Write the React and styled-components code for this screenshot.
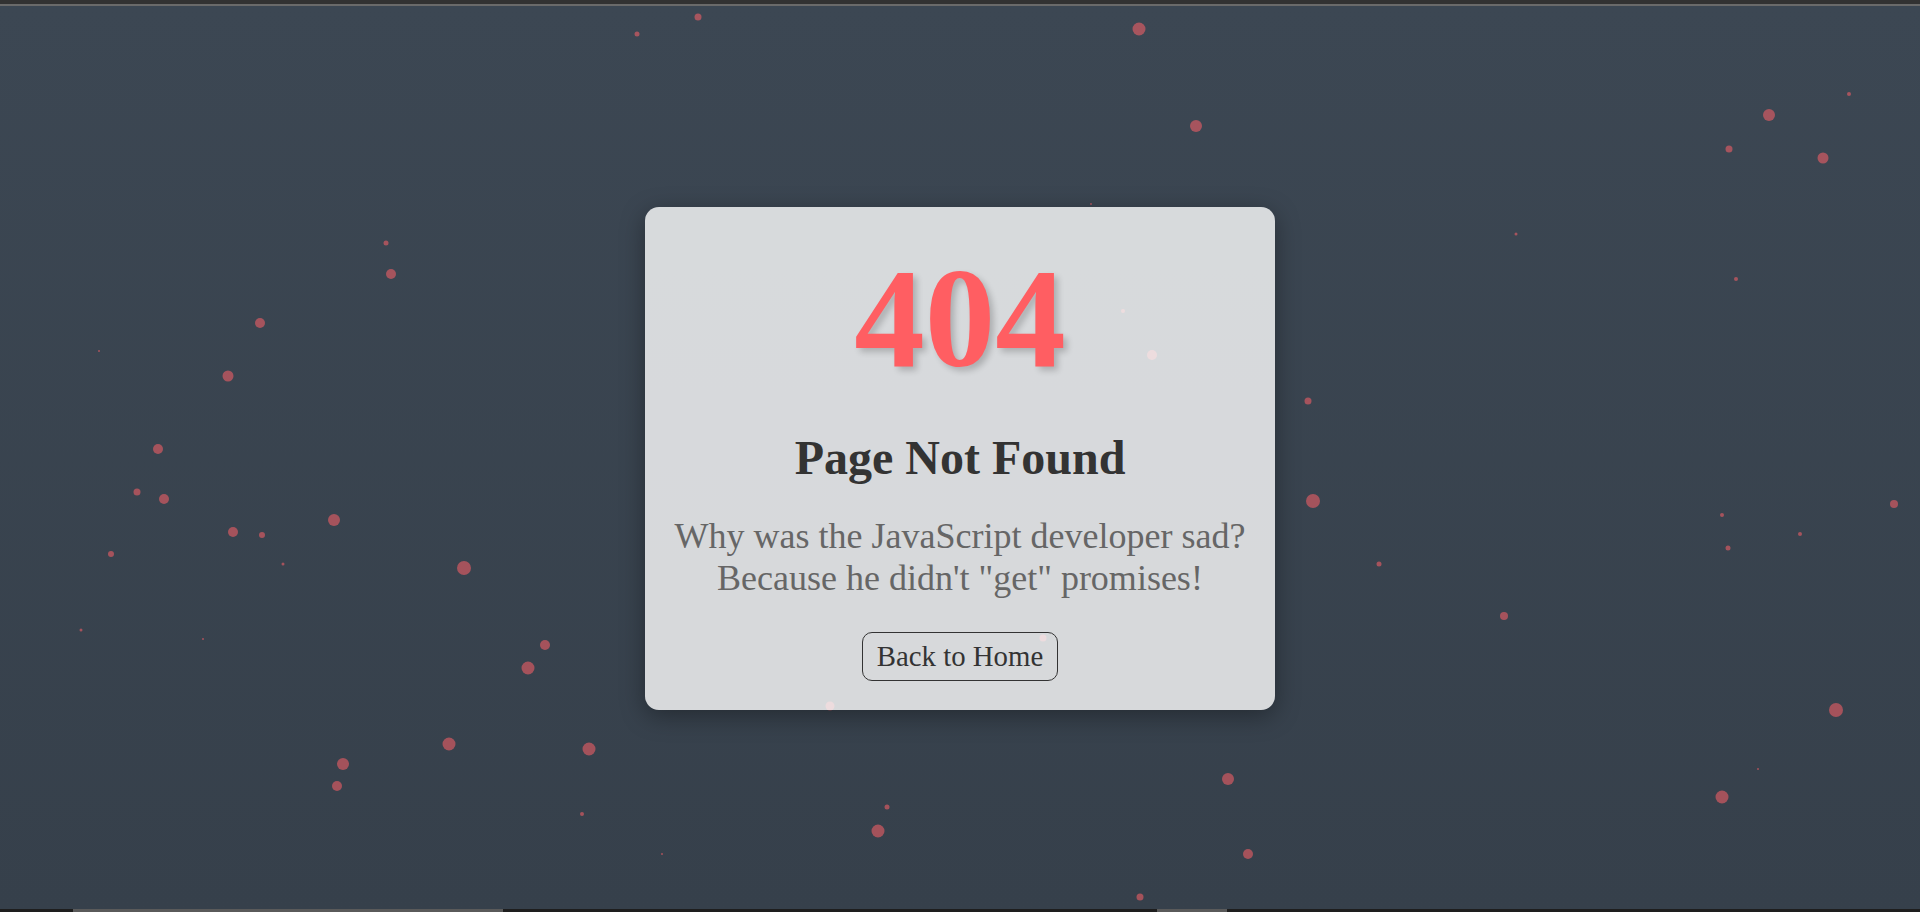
import React from 'react';
import styled, { createGlobalStyle } from 'styled-components';

const GlobalStyle = createGlobalStyle`
  html, body {
    margin: 0;
    padding: 0;
    height: 100%;
    overflow: hidden;
  }
  body {
    font-family: "Liberation Serif", "Times New Roman", serif;
    background: #36404b;
  }
`;

// x, y are centre points, d is diameter
const particles = [
  [698, 16, 7], [637, 33, 5], [1139, 28, 13], [1196, 125, 12], [1769, 114, 12],
  [1849, 93, 4], [1729, 148, 7], [1823, 157, 11], [1516, 233, 3], [1736, 278, 4],
  [386, 242, 5], [391, 273, 10], [260, 322, 10], [228, 375, 11], [99, 350, 2],
  [158, 448, 10], [137, 491, 7], [164, 498, 10], [334, 519, 12], [233, 531, 10],
  [262, 534, 6], [111, 553, 6], [283, 563, 3], [464, 567, 14], [81, 629, 3],
  [203, 638, 2], [545, 644, 10], [528, 667, 13], [449, 743, 13], [589, 748, 13],
  [343, 763, 12], [337, 785, 10], [582, 813, 4], [662, 853, 2], [887, 806, 5],
  [878, 830, 13], [1228, 778, 12], [1248, 853, 10], [1140, 896, 7], [1308, 400, 7],
  [1313, 500, 14], [1379, 563, 5], [1504, 615, 8], [1722, 514, 4], [1728, 547, 5],
  [1800, 533, 4], [1894, 503, 8], [1836, 709, 14], [1722, 796, 13], [1758, 768, 2],
  [1091, 203, 2], [1152, 354, 10], [1123, 310, 4], [830, 705, 9], [1043, 637, 7],
];

const TopChrome = styled.div`
  height: 4px;
  background: #323232;
  border-bottom: 2px solid #6a6a6a;
`;

const Scene = styled.main`
  position: relative;
  height: 903px;
  overflow: hidden;
  background: linear-gradient(180deg, #3c4753 0%, #36404b 100%);
  display: flex;
  align-items: center;
  justify-content: center;
`;

const Particle = styled.span`
  position: absolute;
  border-radius: 50%;
  background: rgba(255, 96, 104, 0.55);
  transform: translate(-50%, -50%);
`;

const Card = styled.section`
  position: relative;
  z-index: 1;
  box-sizing: border-box;
  width: 630px;
  height: 503px;
  margin-top: 2px;
  padding: 30px 20px 30px;
  border-radius: 14px;
  background: rgba(255, 255, 255, 0.8);
  box-shadow: 0 6px 24px rgba(0, 0, 0, 0.35);
  text-align: center;
  display: flex;
  flex-direction: column;
  align-items: center;
`;

const Code = styled.h1`
  margin: 0;
  font-size: 141px;
  font-weight: 700;
  line-height: normal;
  color: #ff5e62;
  text-shadow: 4px 4px 6px rgba(0, 0, 0, 0.2);
`;

const Title = styled.h2`
  margin: 31px 0 0;
  font-size: 48px;
  font-weight: 700;
  line-height: normal;
  color: #333;
`;

const Joke = styled.p`
  margin: 30px 0 0;
  font-size: 36px;
  line-height: normal;
  color: #666;
`;

const HomeButton = styled.button`
  margin-top: 33px;
  padding: 7px 14px;
  font-family: inherit;
  font-size: 28.8px;
  line-height: normal;
  color: #333;
  background: transparent;
  border: 1px solid #333;
  border-radius: 10px;
  cursor: pointer;
`;

const BottomBar = styled.div`
  position: relative;
  height: 3px;
  background: #1e1e1e;
`;

const Thumb = styled.span`
  position: absolute;
  top: 0;
  height: 3px;
  background: #5a5a5a;
`;

const App = () => (
  <>
    <GlobalStyle />
    <TopChrome />
    <Scene>
      {particles.map(([x, y, d], i) => (
        <Particle
          key={i}
          style={{ left: x, top: y - 5, width: d, height: d }}
        />
      ))}
      <Card>
        <Code>404</Code>
        <Title>Page Not Found</Title>
        <Joke>
          Why was the JavaScript developer sad?
          <br />
          Because he didn't "get" promises!
        </Joke>
        <HomeButton>Back to Home</HomeButton>
      </Card>
    </Scene>
    <BottomBar>
      <Thumb style={{ left: 73, width: 430 }} />
      <Thumb style={{ left: 1157, width: 70 }} />
    </BottomBar>
  </>
);

export default App;
